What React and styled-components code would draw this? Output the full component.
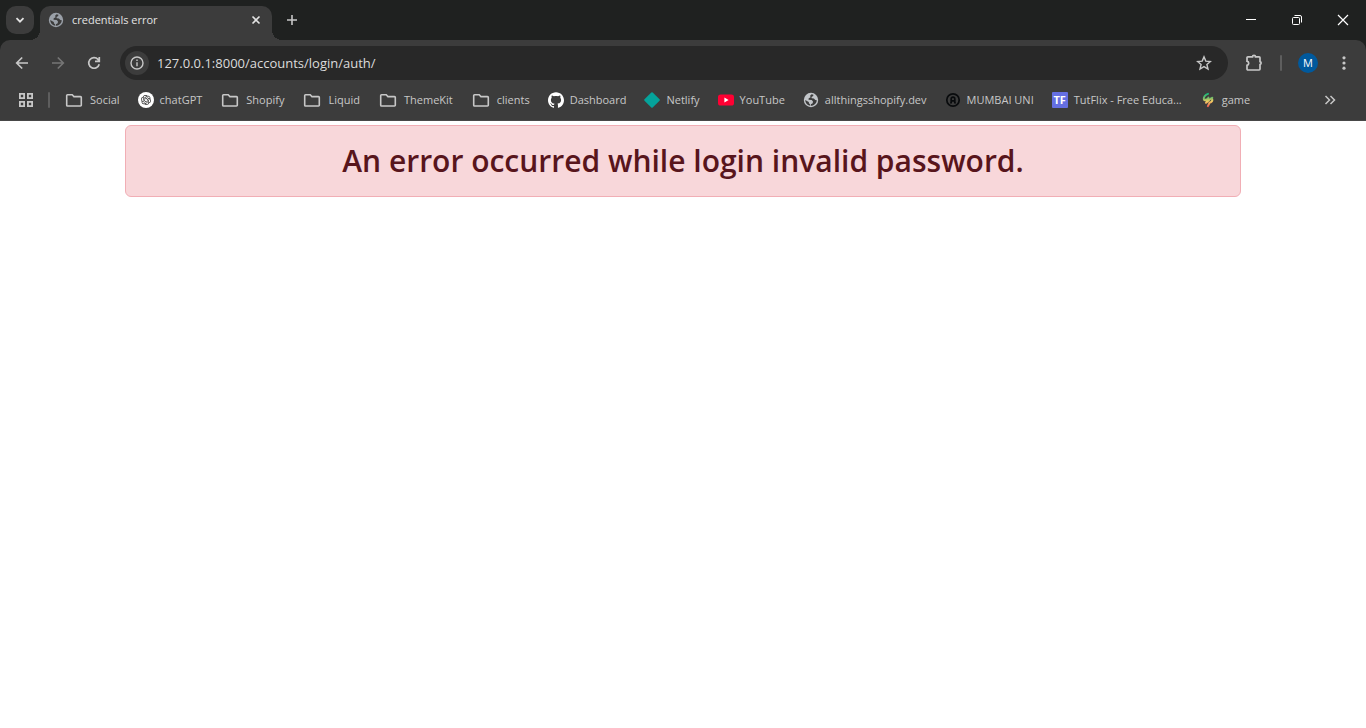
import React from "react";
import styled, { createGlobalStyle, css } from "styled-components";
import { SiGithub } from "react-icons/si";
import { RiOpenaiFill } from "react-icons/ri";

const GlobalStyle = createGlobalStyle`
  *, *::before, *::after { box-sizing: border-box; }
  body {
    margin: 0;
    background: #fff;
    font-family: "Open Sans", "Noto Sans", sans-serif;
  }
  button { font: inherit; color: inherit; border: 0; padding: 0; background: none; }
  svg { display: block; flex: none; }
`;

const Browser = styled.div`
  background: #1f2120;
  color: #c7c7c7;
`;

const TabStrip = styled.div`
  display: flex;
  align-items: flex-end;
  height: 40px;
  padding-left: 6px;
`;

const TabSearch = styled.button`
  display: grid;
  place-items: center;
  width: 28px;
  height: 28px;
  margin: 0 6px 6px 0;
  border-radius: 10px;
  background: #3c3c3c;
  color: #e3e3e3;
`;

const flare = css`
  content: "";
  position: absolute;
  bottom: 0;
  width: 10px;
  height: 10px;
`;

const Tab = styled.div`
  position: relative;
  display: flex;
  align-items: center;
  gap: 8px;
  width: 232px;
  height: 34px;
  padding: 0 8px 6px;
  border-radius: 10px 10px 0 0;
  background: #3c3c3c;
  color: #e3e3e3;
  &::before {
    ${flare}
    left: -10px;
    background: radial-gradient(circle at 0 0, transparent 10px, #3c3c3c 10px);
  }
  &::after {
    ${flare}
    right: -10px;
    background: radial-gradient(circle at 100% 0, transparent 10px, #3c3c3c 10px);
  }
`;

const TabTitle = styled.span`
  flex: 1;
  font-size: 11px;
  line-height: 16px;
`;

const SmallButton = styled.button`
  display: grid;
  place-items: center;
  flex: none;
  width: 16px;
  height: 16px;
  color: ${(p) => (p.$bright ? "#e3e3e3" : "#c7c7c7")};
`;

const NewTab = styled.button`
  display: grid;
  place-items: center;
  width: 28px;
  height: 28px;
  margin: 0 0 6px 6px;
`;

const WindowControls = styled.div`
  display: flex;
  align-self: stretch;
  margin-left: auto;
`;

const WindowButton = styled.button`
  display: grid;
  place-items: center;
  width: 46px;
  color: #fff;
`;

const Chrome = styled.div`
  padding-top: 6px;
  border-radius: 10px 10px 0 0;
  border-bottom: 1px solid #484848;
  background: #3c3c3c;
`;

const Toolbar = styled.div`
  display: flex;
  align-items: center;
  height: 34px;
  padding: 0 3px 0 5px;
`;

const IconButton = styled.button`
  display: grid;
  place-items: center;
  flex: none;
  width: 34px;
  height: 34px;
  margin-right: 2px;
  color: ${(p) => (p.disabled ? "#757575" : "#c7c7c7")};
`;

const Omnibox = styled.div`
  display: flex;
  align-items: center;
  flex: 1;
  height: 34px;
  margin: 0 9px 0 7px;
  padding: 0 5px;
  border-radius: 17px;
  background: #282828;
`;

const SiteInfo = styled.button`
  display: grid;
  place-items: center;
  width: 24px;
  height: 24px;
  border-radius: 50%;
  background: #3c3c3c;
`;

const Address = styled.input`
  flex: 1;
  min-width: 0;
  margin-left: 8px;
  padding: 0;
  border: 0;
  outline: 0;
  background: none;
  color: #dcdcdc;
  font: 13px/20px "Open Sans", "Noto Sans", sans-serif;
`;

const Divider = styled.span`
  flex: none;
  width: 2px;
  height: 16px;
  margin-left: ${(p) => p.$space}px;
  border-radius: 1px;
  background: #5e5e5e;
`;

const Avatar = styled.button`
  flex: none;
  width: 20px;
  height: 20px;
  margin: 0 9px 0 16px;
  border-radius: 50%;
  background: #00599d;
  color: #fff;
  font-size: 11px;
  font-weight: 500;
  line-height: 20px;
`;

const Bookmarks = styled.nav`
  display: flex;
  align-items: center;
  height: 40px;
  padding: 0 28px 0 18px;
`;

const BookmarkList = styled.div`
  display: flex;
  flex: 1;
  gap: 18px;
  min-width: 0;
  margin-left: 14px;
  overflow: hidden;
`;

const Bookmark = styled.a`
  display: flex;
  flex: none;
  align-items: center;
  gap: 6px;
  color: #c7c7c7;
  font-size: 11px;
  line-height: 20px;
  white-space: nowrap;
  text-decoration: none;
`;

const Page = styled.main`
  max-width: 1140px;
  margin: 0 auto;
  padding: 4px 12px;
`;

const Alert = styled.div`
  padding: 16px;
  border: 1px solid #f1aeb5;
  border-radius: 6px;
  background: #f8d7da;
  color: #58151c;
  text-align: center;
`;

const AlertTitle = styled.h2`
  margin: 0;
  font-size: 30px;
  font-weight: 600;
  line-height: 38px;
`;

const Line = ({ size = 16, width = 2, children, ...rest }) => (
  <svg width={size} height={size} viewBox={`0 0 ${size} ${size}`} fill="none" stroke="currentColor" strokeWidth={width} aria-hidden="true" {...rest}>
    {children}
  </svg>
);

const Globe = ({ color }) => (
  <svg width="16" height="16" viewBox="0 0 16 16" aria-hidden="true">
    <circle cx="8" cy="8" r="7.2" fill={color} />
    <path d="M8.6 2.2 7.1 3.8l.5 1.5-1.9 1-.2 1.5 3.2.2 1.3 1.5-.3 1.8-1.8 1-.3 1.4 1.4.1c2.6-.5 4.7-2.8 4.8-5.5l-1.5-.3-1.4-1.6-2.2-.1-.2-1.3 1.7-.9.2-1.3zM2.2 7.9l3.6 2.2.2 1.3 1 .7-.1 1.6C4.2 13.2 2.2 10.9 2.2 7.9z" fill="#3c3c3c" />
  </svg>
);

const Folder = () => (
  <Line size={20} width={1.6}>
    <path d="M3.5 4.8h4.7l1.7 1.8h6.6a.8.8 0 0 1 .8.8v7.8a.8.8 0 0 1-.8.8h-13a.8.8 0 0 1-.8-.8V5.6a.8.8 0 0 1 .8-.8z" />
  </Line>
);

const ChatGpt = () => (
  <svg width="16" height="16" viewBox="0 0 16 16" aria-hidden="true">
    <circle cx="8" cy="8" r="8" fill="#fff" />
    <RiOpenaiFill x="2" y="2" size="12" color="#222" />
  </svg>
);

const Netlify = () => (
  <svg width="16" height="16" viewBox="0 0 16 16" aria-hidden="true">
    <path d="M7.3.5a1 1 0 0 1 1.4 0l6.8 6.8a1 1 0 0 1 0 1.4l-6.8 6.8a1 1 0 0 1-1.4 0L.5 8.7a1 1 0 0 1 0-1.4z" fill="#05a39b" />
  </svg>
);

const YouTube = () => (
  <svg width="16" height="16" viewBox="0 0 16 16" aria-hidden="true">
    <rect y="2.4" width="16" height="11.2" rx="2.6" fill="#ff0033" />
    <path d="m6.4 5.6 4.2 2.4-4.2 2.4z" fill="#fff" />
  </svg>
);

const University = () => (
  <Line width={1.7} stroke="#090b0d">
    <circle cx="8" cy="8" r="6.2" />
    <path d="M6.2 11V7a1.8 1.8 0 0 1 3.6 0v4M6.2 8.8h3.6" />
    <path d="M5 11h2m2 0h2" strokeWidth="1.2" />
  </Line>
);

const TutFlixMark = styled.span`
  width: 16px;
  height: 16px;
  border-radius: 1px;
  background: #656fe2;
  color: #fff;
  font-size: 11px;
  font-weight: 700;
  line-height: 16px;
  text-align: center;
`;

const Game = () => (
  <Line width={2} stroke="url(#game-ink)" strokeLinecap="round" strokeLinejoin="round">
    <defs>
      <linearGradient id="game-ink" gradientUnits="userSpaceOnUse" x1="8" y1="1" x2="9" y2="15">
        <stop offset="0" stopColor="#10b77b" />
        <stop offset=".35" stopColor="#75bd68" />
        <stop offset=".6" stopColor="#f3cf63" />
        <stop offset="1" stopColor="#ef5350" />
      </linearGradient>
    </defs>
    <path d="M8 1.9C5.6 2.8 3.7 4.8 3.8 7c0 1.6 1.6 1.5 2.6.2M6 10.8 8.4 5.6M6 10.8c1.8-.5 3-4 6.3-5M12.3 7.4c.3 2-.6 2.8-2.7 3.4l-1.7 3.3" />
  </Line>
);

const bookmarks = [
  ["Social", <Folder />],
  ["chatGPT", <ChatGpt />],
  ["Shopify", <Folder />],
  ["Liquid", <Folder />],
  ["ThemeKit", <Folder />],
  ["clients", <Folder />],
  ["Dashboard", <SiGithub size={16} color="#fff" />],
  ["Netlify", <Netlify />],
  ["YouTube", <YouTube />],
  ["allthingsshopify.dev", <Globe color="#c2c5c9" />],
  ["MUMBAI UNI", <University />],
  ["TutFlix - Free Educa...", <TutFlixMark>TF</TutFlixMark>],
  ["game", <Game />],
];

export default function App() {
  return (
    <>
      <GlobalStyle />
      <Browser>
        <TabStrip>
          <TabSearch aria-label="Search tabs">
            <Line size={10} width={1.8}><path d="m1.5 3.2 3.5 3.5 3.5-3.5" /></Line>
          </TabSearch>
          <Tab>
            <Globe color="#9aa0a8" />
            <TabTitle>credentials error</TabTitle>
            <SmallButton $bright aria-label="Close tab">
              <Line size={10} width={1.6}><path d="m1.5 1.5 7 7m0-7-7 7" /></Line>
            </SmallButton>
          </Tab>
          <NewTab aria-label="New tab">
            <Line size={12} width={1.6}><path d="M6 1v10M1 6h10" /></Line>
          </NewTab>
          <WindowControls>
            <WindowButton aria-label="Minimize">
              <Line size={10} width={1}><path d="M0 4.5h10" /></Line>
            </WindowButton>
            <WindowButton aria-label="Restore">
              <Line size={10} width={1}>
                <rect x=".5" y="2.5" width="7" height="7" rx="1" />
                <path d="M2.5.5H8A1.5 1.5 0 0 1 9.5 2v5.5" />
              </Line>
            </WindowButton>
            <WindowButton aria-label="Close">
              <Line size={12} width={1.2}><path d="m1 1 10 10M11 1 1 11" /></Line>
            </WindowButton>
          </WindowControls>
        </TabStrip>
        <Chrome>
          <Toolbar>
            <IconButton aria-label="Back">
              <Line width={1.7}><path d="M14 8H3m5.2-5.5L2.7 8l5.5 5.5" /></Line>
            </IconButton>
            <IconButton aria-label="Forward" disabled>
              <Line width={1.7}><path d="M2 8h11M7.8 2.5 13.3 8l-5.5 5.5" /></Line>
            </IconButton>
            <IconButton aria-label="Reload">
              <Line width={1.7}><path d="M13.2 9.2A5.3 5.3 0 1 1 12 4.4l1.2 1.4M13.3 2v4.3H9" /></Line>
            </IconButton>
            <Omnibox>
              <SiteInfo aria-label="Site information">
                <Line size={14} width={1.4}>
                  <circle cx="7" cy="7" r="6" />
                  <path d="M7 6.2v4M7 3.6v1.5" />
                </Line>
              </SiteInfo>
              <Address aria-label="Address" defaultValue="127.0.0.1:8000/accounts/login/auth/" />
              <IconButton aria-label="Bookmark this tab">
                <Line width={1.4}>
                  <path d="m8 1.9 1.8 4.2 4.6.4-3.5 3 1.1 4.5L8 11.6 4 14l1.1-4.5-3.5-3 4.6-.4z" />
                </Line>
              </IconButton>
            </Omnibox>
            <IconButton aria-label="Extensions">
              <Line size={18} width={1.7}>
                <path d="M2.9 2.9h4.6a1.5 1.5 0 0 1 3 0h3.6a.9.9 0 0 1 .9.9v3.8a1.5 1.5 0 0 1 0 2.9v4.6a.9.9 0 0 1-.9.9H2.9a.9.9 0 0 1-.9-.9v-3.8c2.3-.5 2.3-3.6 0-4.1V3.8a.9.9 0 0 1 .9-.9z" />
              </Line>
            </IconButton>
            <Divider $space={7} />
            <Avatar aria-label="Profile">M</Avatar>
            <IconButton aria-label="Menu">
              <svg width="16" height="16" viewBox="0 0 16 16" fill="currentColor" aria-hidden="true">
                <circle cx="8" cy="2.8" r="1.6" /><circle cx="8" cy="8" r="1.6" /><circle cx="8" cy="13.2" r="1.6" />
              </svg>
            </IconButton>
          </Toolbar>
          <Bookmarks aria-label="Bookmarks">
            <SmallButton aria-label="Apps">
              <Line width={1.8}>
                <path d="M1.9 1.9h4.2v4.2H1.9zM9.9 1.9h4.2v4.2H9.9zM1.9 9.9h4.2v4.2H1.9zM9.9 9.9h4.2v4.2H9.9z" />
              </Line>
            </SmallButton>
            <Divider $space={14} />
            <BookmarkList>
              {bookmarks.map(([label, icon]) => (
                <Bookmark href="#" key={label}>{icon}{label}</Bookmark>
              ))}
            </BookmarkList>
            <SmallButton aria-label="More bookmarks">
              <Line size={12} width={1.5}><path d="m1.5 2 4 4-4 4m5-8 4 4-4 4" /></Line>
            </SmallButton>
          </Bookmarks>
        </Chrome>
      </Browser>
      <Page>
        <Alert role="alert">
          <AlertTitle>An error occurred while login invalid password.</AlertTitle>
        </Alert>
      </Page>
    </>
  );
}
